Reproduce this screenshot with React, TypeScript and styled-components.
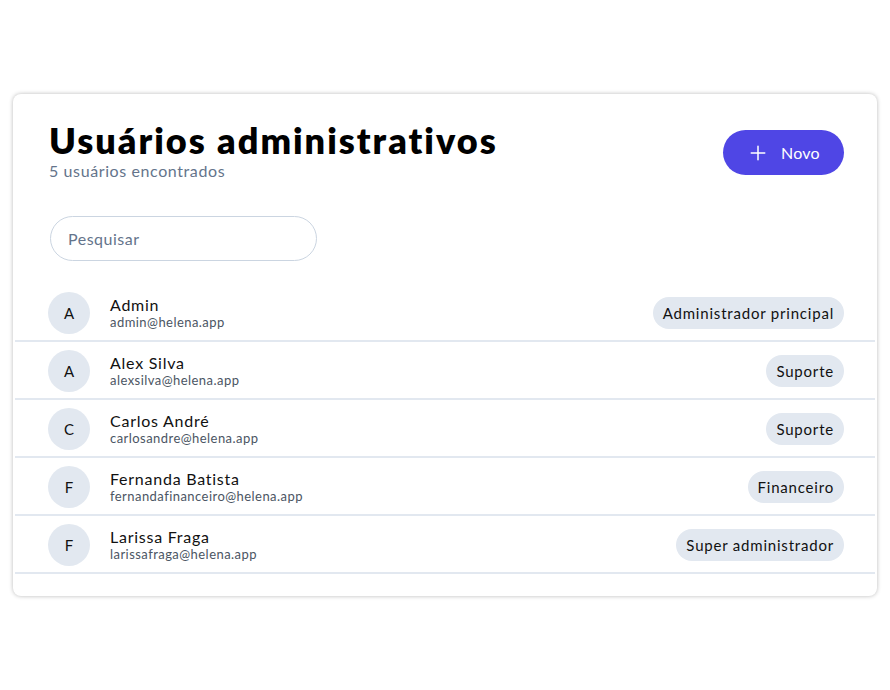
import { createGlobalStyle, styled } from 'styled-components';

const users = [
  { initial: 'A', name: 'Admin', email: 'admin@helena.app', role: 'Administrador principal' },
  { initial: 'A', name: 'Alex Silva', email: 'alexsilva@helena.app', role: 'Suporte' },
  { initial: 'C', name: 'Carlos André', email: 'carlosandre@helena.app', role: 'Suporte' },
  { initial: 'F', name: 'Fernanda Batista', email: 'fernandafinanceiro@helena.app', role: 'Financeiro' },
  { initial: 'F', name: 'Larissa Fraga', email: 'larissafraga@helena.app', role: 'Super administrador' },
];

const App = () => {
  return (
    <>
      <GlobalStyle />
      <Page>
        <Card>
          <Header>
            <div>
              <Title>Usuários administrativos</Title>
              <Subtitle>{users.length} usuários encontrados</Subtitle>
            </div>
            <NewButton type='button'>
              <svg width='18' height='18' viewBox='0 0 24 24' fill='none' stroke='currentColor' strokeWidth='2' strokeLinecap='round'>
                <path d='M12 3v18M3 12h18' />
              </svg>
              Novo
            </NewButton>
          </Header>
          <SearchInput placeholder='Pesquisar' />
          <UserList>
            {users.map((u) => (
              <UserRow key={u.email}>
                <Avatar>{u.initial}</Avatar>
                <UserInfo>
                  <UserName>{u.name}</UserName>
                  <UserEmail>{u.email}</UserEmail>
                </UserInfo>
                <RoleBadge>{u.role}</RoleBadge>
              </UserRow>
            ))}
          </UserList>
        </Card>
      </Page>
    </>
  );
};

const GlobalStyle = createGlobalStyle`
  html, body {
    margin: 0;
    background: #ffffff;
    font-family: Lato, 'Noto Sans', sans-serif;
    color: #111111;
  }
`;

const Page = styled.div`
  min-height: 690px;
  display: flex;
  align-items: center;
  justify-content: center;
  padding: 0 13px;
  box-sizing: border-box;
`;

const Card = styled.div`
  width: 100%;
  background: #ffffff;
  border-radius: 8px;
  box-shadow: 0 0 4px rgba(0, 0, 0, 0.28);
  padding: 24px 0 22px;
  box-sizing: border-box;
`;

const Header = styled.div`
  display: flex;
  justify-content: space-between;
  align-items: flex-start;
  padding: 0 33px 0 36px;
`;

const Title = styled.h1`
  margin: 0;
  font-size: 36px;
  font-weight: 800;
  line-height: 44px;
  letter-spacing: 2px;
  color: #000000;
`;

const Subtitle = styled.p`
  margin: 0;
  font-size: 16px;
  line-height: 17px;
  letter-spacing: 0.6px;
  color: #64748b;
`;

const NewButton = styled.button`
  display: flex;
  align-items: center;
  gap: 14px;
  height: 45px;
  margin-top: 12px;
  padding: 0 24px 0 26px;
  border: none;
  border-radius: 999px;
  background: #4f46e5;
  color: #ffffff;
  font-family: inherit;
  font-size: 16px;
  letter-spacing: 0.3px;
  cursor: pointer;
`;

const SearchInput = styled.input`
  display: block;
  margin: 37px 0 23px 37px;
  width: 267px;
  height: 45px;
  box-sizing: border-box;
  padding: 0 17px;
  border: 1px solid #cbd5e1;
  border-radius: 999px;
  font-family: inherit;
  font-size: 16px;
  letter-spacing: 0.5px;
  color: #111111;
  outline: none;
  &::placeholder {
    color: #64748b;
  }
`;

const UserList = styled.div`
  display: flex;
  flex-direction: column;
  margin: 0 2px;
`;

const UserRow = styled.div`
  display: flex;
  align-items: center;
  gap: 20px;
  height: 58px;
  box-sizing: border-box;
  padding: 1px 31px 0 33px;
  border-bottom: 2px solid #e2e8f0;
`;

const Avatar = styled.div`
  width: 42px;
  height: 42px;
  flex-shrink: 0;
  border-radius: 50%;
  background: #e2e8f0;
  display: flex;
  align-items: center;
  justify-content: center;
  font-size: 15px;
  color: #111111;
`;

const UserInfo = styled.div`
  flex: 1;
  display: flex;
  flex-direction: column;
`;

const UserName = styled.span`
  font-size: 16px;
  line-height: 19px;
  letter-spacing: 0.75px;
  color: #111111;
`;

const UserEmail = styled.span`
  font-size: 13px;
  line-height: 16px;
  letter-spacing: 0.45px;
  color: #4b5563;
`;

const RoleBadge = styled.span`
  padding: 0 10px;
  height: 32px;
  display: flex;
  align-items: center;
  border-radius: 999px;
  background: #e2e8f0;
  font-size: 15px;
  letter-spacing: 0.8px;
  color: #111111;
`;

export default App;
